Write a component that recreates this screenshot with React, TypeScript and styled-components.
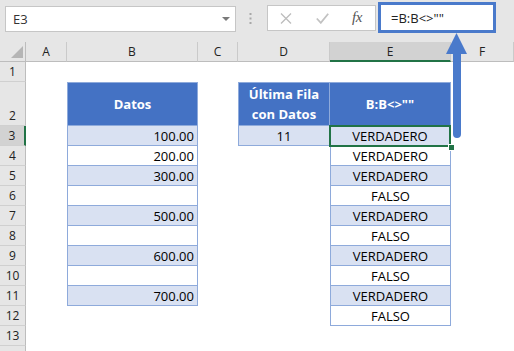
import * as React from 'react';
import styled, { createGlobalStyle, css } from 'styled-components';

const GlobalStyle = createGlobalStyle`
  html, body {
    margin: 0;
    padding: 0;
    background: #fff;
  }
  body {
    font-family: 'Open Sans', 'Liberation Sans', sans-serif;
    overflow: hidden;
  }
`;

const GREEN = '#217346';
const HEAD_BLUE = '#4472c4';
const BAND = '#d9e1f2';
const LINE = '#8eaadb';

const COLS = ['A', 'B', 'C', 'D', 'E', 'F'];
const ROWS = [1, 2, 3, 4, 5, 6, 7, 8, 9, 10, 11, 12, 13];

const Page = styled.div`
  position: relative;
  width: 514px;
  height: 351px;
  overflow: hidden;
  background: #fff;
`;

/* formula bar */

const FormulaBar = styled.div`
  display: flex;
  align-items: flex-start;
  height: 42px;
  padding-left: 5px;
  box-sizing: border-box;
  background: #e6e6e6;
`;

const NameBox = styled.div`
  display: flex;
  align-items: center;
  justify-content: space-between;
  width: 231px;
  height: 26px;
  margin-top: 6px;
  padding: 0 5px 0 7px;
  box-sizing: border-box;
  background: #fff;
  border: 1px solid #c6c6c6;
  font-size: 13px;
  color: #333;
`;

const DropArrow = styled.span`
  width: 0;
  height: 0;
  border-left: 4px solid transparent;
  border-right: 4px solid transparent;
  border-top: 4px solid #7a7a7a;
`;

const Grip = styled.svg`
  margin: 13px 0 0 13px;
`;

const ButtonsBox = styled.div`
  display: flex;
  align-items: center;
  width: 109px;
  height: 26px;
  margin: 5px 0 0 15px;
  padding-left: 12px;
  box-sizing: border-box;
  background: #fff;
  border: 1px solid #c6c6c6;
`;

const IconSlot = styled.span<{ $gap: number }>`
  display: flex;
  margin-right: ${({ $gap }) => $gap}px;
`;

const Fx = styled.span`
  font-family: 'Liberation Serif', serif;
  font-style: italic;
  font-size: 15px;
  color: #555;
  letter-spacing: -0.5px;
  margin-top: -2px;
`;

const FormulaInput = styled.div`
  display: flex;
  align-items: center;
  width: 118px;
  height: 31px;
  margin: 2px 0 0 2px;
  padding-left: 10px;
  box-sizing: border-box;
  background: #fff;
  border: 3px solid #4a7acb;
  font-size: 13px;
  color: #222;
`;

/* sheet */

const Sheet = styled.div`
  display: grid;
  grid-template-columns: 26px 41px 131px 40px 92px 121px 1fr;
  grid-template-rows: 20px 20px 44px repeat(11, 20px);
`;

const Corner = styled.div`
  display: flex;
  align-items: flex-end;
  justify-content: flex-end;
  background: #e6e6e6;
  border-right: 1px solid #bdbdbd;
  border-bottom: 1px solid #bdbdbd;
`;

const CornerMark = styled.span`
  width: 0;
  height: 0;
  margin: 0 2px 3px 0;
  border-left: 12px solid transparent;
  border-bottom: 12px solid #b5b5b5;
`;

const ColHeader = styled.div<{ $active?: boolean }>`
  display: flex;
  align-items: center;
  justify-content: center;
  box-sizing: border-box;
  background: ${({ $active }) => ($active ? '#d2d2d2' : '#e6e6e6')};
  border-right: 1px solid #cacaca;
  border-bottom: ${({ $active }) =>
    $active ? `2px solid ${GREEN}` : '1px solid #bdbdbd'};
  font-size: 12px;
  color: #222;
`;

const RowHeader = styled.div<{ $active?: boolean }>`
  display: flex;
  align-items: flex-end;
  justify-content: center;
  box-sizing: border-box;
  padding-bottom: 1px;
  line-height: 17px;
  background: ${({ $active }) => ($active ? '#d2d2d2' : '#e6e6e6')};
  border-right: ${({ $active }) =>
    $active ? `2px solid ${GREEN}` : '1px solid #bdbdbd'};
  border-bottom: 1px solid #d0d0d0;
  font-size: 12px;
  color: #222;
`;

type Fill = 'head' | 'band' | 'plain';
type Align = 'left' | 'center' | 'right';

const Cell = styled.div<{
  $fill?: Fill;
  $align?: Align;
  $top?: boolean;
  $left?: boolean;
  $selected?: boolean;
}>`
  position: relative;
  display: flex;
  align-items: center;
  justify-content: ${({ $align }) =>
    $align === 'right' ? 'flex-end' : $align === 'center' ? 'center' : 'flex-start'};
  box-sizing: border-box;
  padding: 0 3px;
  font-size: 13px;
  line-height: 20px;
  color: #000;
  text-align: center;
  white-space: pre-line;

  ${({ $fill, $top, $left }) =>
    $fill &&
    css`
      background: ${$fill === 'head' ? HEAD_BLUE : $fill === 'band' ? BAND : '#fff'};
      border-right: 1px solid ${LINE};
      border-bottom: 1px solid ${LINE};
      border-top: ${$top ? `1px solid ${LINE}` : 'none'};
      border-left: ${$left ? `1px solid ${LINE}` : 'none'};
    `}

  ${({ $fill }) =>
    $fill === 'head' &&
    css`
      color: #fff;
      font-weight: 700;
    `}

  ${({ $selected }) =>
    $selected &&
    css`
      z-index: 2;
      &::after {
        content: '';
        position: absolute;
        top: -1px;
        left: -1px;
        right: -1px;
        bottom: -2px;
        border: 2px solid ${GREEN};
      }
      &::before {
        content: '';
        position: absolute;
        right: -5px;
        bottom: -6px;
        width: 5px;
        height: 5px;
        background: ${GREEN};
        border: 1px solid #fff;
        z-index: 1;
      }
    `}
`;

/* the next row header, only its top edge shows at the bottom of the window */
const TailRow = styled.div`
  width: 26px;
  height: 6px;
  box-sizing: border-box;
  background: #e6e6e6;
  border-right: 1px solid #bdbdbd;
`;

const Arrow = styled.svg`
  position: absolute;
  left: 444px;
  top: 30px;
`;

type CellSpec = {
  text?: string;
  fill?: Fill;
  align?: Align;
  top?: boolean;
  left?: boolean;
  selected?: boolean;
};

const datos = ['100.00', '200.00', '300.00', '', '500.00', '', '600.00', '', '700.00'];
const results = [
  'VERDADERO',
  'VERDADERO',
  'VERDADERO',
  'FALSO',
  'VERDADERO',
  'FALSO',
  'VERDADERO',
  'FALSO',
  'VERDADERO',
  'FALSO',
];

function getCell(col: string, row: number): CellSpec {
  const band: Fill = row % 2 === 1 ? 'band' : 'plain';
  if (col === 'B') {
    if (row === 2) return { text: 'Datos', fill: 'head', align: 'center', top: true, left: true };
    if (row >= 3 && row <= 11)
      return { text: datos[row - 3], fill: band, align: 'right', left: true };
  }
  if (col === 'D') {
    if (row === 2)
      return { text: 'Última Fila\ncon Datos', fill: 'head', align: 'center', top: true, left: true };
    if (row === 3) return { text: '11', fill: 'band', align: 'center', left: true };
  }
  if (col === 'E') {
    if (row === 2) return { text: 'B:B<>""', fill: 'head', align: 'center', top: true };
    if (row >= 3 && row <= 12)
      return {
        text: results[row - 3],
        fill: band,
        align: 'center',
        left: row > 3,
        selected: row === 3,
      };
  }
  return {};
}

export default function App() {
  return (
    <Page>
      <GlobalStyle />
      <FormulaBar>
        <NameBox>
          E3
          <DropArrow />
        </NameBox>
        <Grip width="3" height="12" viewBox="0 0 3 12">
          <rect x="0.5" y="0" width="2" height="2" fill="#a8a8a8" />
          <rect x="0.5" y="4.5" width="2" height="2" fill="#a8a8a8" />
          <rect x="0.5" y="9" width="2" height="2" fill="#a8a8a8" />
        </Grip>
        <ButtonsBox>
          <IconSlot $gap={24}>
            <svg width="12" height="11" viewBox="0 0 12 11">
              <path d="M1 0.5 L11 10.5 M11 0.5 L1 10.5" stroke="#bdbdbd" strokeWidth="1.3" />
            </svg>
          </IconSlot>
          <IconSlot $gap={23}>
            <svg width="13" height="11" viewBox="0 0 13 11">
              <path d="M0.8 5.5 L4.8 9.8 L12.2 0.8" stroke="#c2c2c2" strokeWidth="1.8" fill="none" />
            </svg>
          </IconSlot>
          <Fx>fx</Fx>
        </ButtonsBox>
        <FormulaInput>=B:B&lt;&gt;""</FormulaInput>
      </FormulaBar>

      <Sheet>
        <Corner>
          <CornerMark />
        </Corner>
        {COLS.map(c => (
          <ColHeader key={c} $active={c === 'E'}>
            {c}
          </ColHeader>
        ))}
        {ROWS.map(r => (
          <React.Fragment key={r}>
            <RowHeader $active={r === 3}>{r}</RowHeader>
            {COLS.map(c => {
              const cell = getCell(c, r);
              return (
                <Cell
                  key={c + r}
                  $fill={cell.fill}
                  $align={cell.align}
                  $top={cell.top}
                  $left={cell.left}
                  $selected={cell.selected}
                >
                  {cell.text}
                </Cell>
              );
            })}
          </React.Fragment>
        ))}
      </Sheet>
      <TailRow />

      <Arrow width="26" height="112" viewBox="0 0 26 112">
        <rect x="9" y="18" width="8" height="90" rx="4" fill="#4a7acb" />
        <polygon points="12.5,3 2,24 23,24" fill="#4a7acb" />
      </Arrow>
    </Page>
  );
}
